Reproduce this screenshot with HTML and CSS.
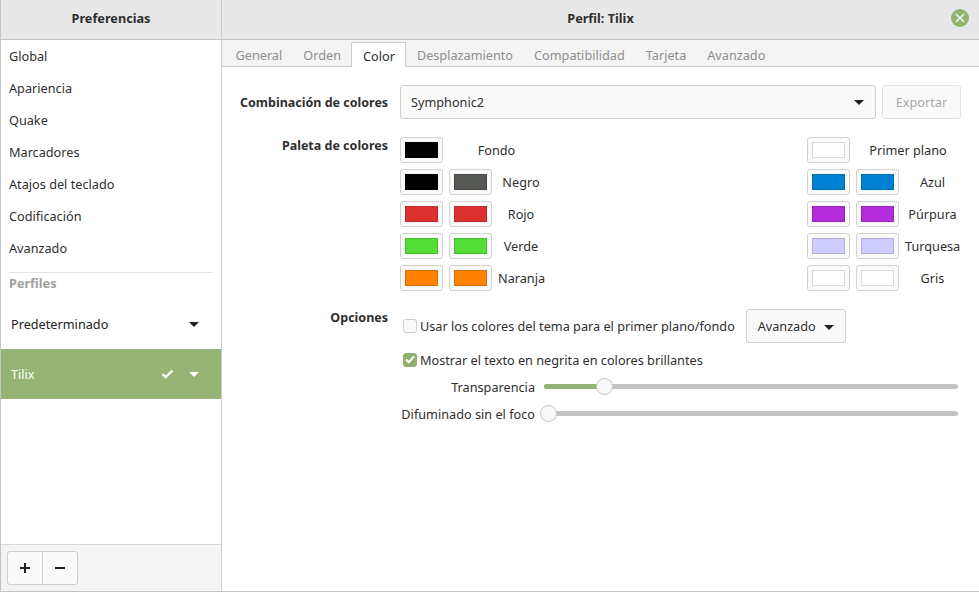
FILE: index.html
```html
<!DOCTYPE html>
<html lang="es">
<head>
    <meta charset="UTF-8">
    <title>Preferencias</title>
    <link rel="stylesheet" href="styles.css">
</head>
<body>
<div class="window">
    <aside class="side">
        <div class="head">Preferencias</div>
        <ul class="nav">
            <li>Global</li>
            <li>Apariencia</li>
            <li>Quake</li>
            <li>Marcadores</li>
            <li>Atajos del teclado</li>
            <li>Codificación</li>
            <li>Avanzado</li>
        </ul>
        <div class="profiles-title">Perfiles</div>
        <div class="profile">
            <span>Predeterminado</span>
            <i class="arrow"></i>
        </div>
        <div class="profile active">
            <span>Tilix</span>
            <svg class="tick" width="13" height="10" viewBox="0 0 13 10"><path d="M1.5 5.2l3.2 3L11.5 1.5" fill="none" stroke="#fff" stroke-width="2.4"/></svg>
            <i class="arrow"></i>
        </div>
        <div class="side-foot">
            <div class="addremove">
                <button><svg width="12" height="12" viewBox="0 0 12 12"><path d="M6 1v10M1 6h10" stroke="#222" stroke-width="2"/></svg></button>
                <button><svg width="12" height="12" viewBox="0 0 12 12"><path d="M1 6h10" stroke="#222" stroke-width="2"/></svg></button>
            </div>
        </div>
    </aside>
    <main class="main">
        <div class="head">
            Perfil: Tilix
            <span class="close"><svg width="10" height="10" viewBox="0 0 10 10"><path d="M1 1l8 8M9 1l-8 8" stroke="#fff" stroke-width="1.3"/></svg></span>
        </div>
        <div class="tabs">
            <a>General</a>
            <a>Orden</a>
            <a class="current">Color</a>
            <a>Desplazamiento</a>
            <a>Compatibilidad</a>
            <a>Tarjeta</a>
            <a>Avanzado</a>
        </div>
        <div class="content">
            <div class="row-scheme">
                <label class="lbl">Combinación de colores</label>
                <div class="combo">Symphonic2 <i class="arrow"></i></div>
                <button class="export">Exportar</button>
            </div>
            <div class="row-palette">
                <label class="lbl lbl-pal">Paleta de colores</label>
                <div class="palette">
                    <div class="pal-col">
                        <div class="pal-row"><span class="sw"><b class="c-black"></b></span><span class="name wide">Fondo</span></div>
                        <div class="pal-row"><span class="sw"><b class="c-black"></b></span><span class="sw"><b class="c-grey"></b></span><span class="name">Negro</span></div>
                        <div class="pal-row"><span class="sw"><b class="c-red"></b></span><span class="sw"><b class="c-red"></b></span><span class="name">Rojo</span></div>
                        <div class="pal-row"><span class="sw"><b class="c-green"></b></span><span class="sw"><b class="c-green"></b></span><span class="name">Verde</span></div>
                        <div class="pal-row"><span class="sw"><b class="c-orange"></b></span><span class="sw"><b class="c-orange"></b></span><span class="name">Naranja</span></div>
                    </div>
                    <div class="pal-col pal-right">
                        <div class="pal-row"><span class="sw"><b class="c-white"></b></span><span class="name wide">Primer plano</span></div>
                        <div class="pal-row"><span class="sw"><b class="c-blue"></b></span><span class="sw"><b class="c-blue"></b></span><span class="name">Azul</span></div>
                        <div class="pal-row"><span class="sw"><b class="c-purple"></b></span><span class="sw"><b class="c-purple"></b></span><span class="name">Púrpura</span></div>
                        <div class="pal-row"><span class="sw"><b class="c-lav"></b></span><span class="sw"><b class="c-lav"></b></span><span class="name">Turquesa</span></div>
                        <div class="pal-row"><span class="sw"><b class="c-white"></b></span><span class="sw"><b class="c-white"></b></span><span class="name">Gris</span></div>
                    </div>
                </div>
            </div>
            <div class="row-options">
                <label class="lbl lbl-opt">Opciones</label>
                <div class="options">
                    <div class="opt-theme">
                        <span class="check"></span>
                        <span class="opt-text">Usar los colores del tema para el primer plano/fondo</span>
                        <button class="adv">Avanzado <i class="arrow"></i></button>
                    </div>
                    <div class="opt-bold">
                        <span class="check on"><svg width="10" height="9" viewBox="0 0 10 9"><path d="M1 4.6l2.8 2.6L9 1.4" fill="none" stroke="#fff" stroke-width="2"/></svg></span>
                        <span class="opt-text">Mostrar el texto en negrita en colores brillantes</span>
                    </div>
                    <div class="slider-row">
                        <span class="sl-label">Transparencia</span>
                        <div class="slider"><div class="fill" style="width: 60px"></div><span class="knob" style="left: 52px"></span></div>
                    </div>
                    <div class="slider-row">
                        <span class="sl-label">Difuminado sin el foco</span>
                        <div class="slider"><span class="knob" style="left: -4px"></span></div>
                    </div>
                </div>
            </div>
        </div>
    </main>
</div>
</body>
</html>
```

FILE: styles.css
```css
* {
    margin: 0;
    padding: 0;
    box-sizing: border-box;
}
html, body {
    width: 979px;
    height: 592px;
    overflow: hidden;
}
body {
    font-family: "Noto Sans", sans-serif;
    font-size: 12.7px;
    color: #2f2f2f;
    background: #fff;
}
button {
    font: inherit;
    color: inherit;
}
.window {
    display: flex;
    height: 592px;
    border-left: 1px solid #c4c4c4;
    border-bottom: 1px solid #c4c4c4;
}
.side {
    width: 221px;
    flex: none;
    display: flex;
    flex-direction: column;
    border-right: 1px solid #cdcdcd;
}
.main {
    flex: 1;
    min-width: 0;
    display: flex;
    flex-direction: column;
}
.head {
    height: 40px;
    flex: none;
    background: #e8e8e8;
    border-bottom: 1px solid #c4c4c4;
    display: flex;
    align-items: center;
    justify-content: center;
    padding-bottom: 3px;
    font-weight: 700;
    position: relative;
}
.close {
    position: absolute;
    right: 10px;
    top: 9px;
    width: 18px;
    height: 18px;
    border-radius: 50%;
    background: #93b372;
    display: flex;
    align-items: center;
    justify-content: center;
}
.nav {
    list-style: none;
}
.nav li {
    height: 32px;
    line-height: 32px;
    padding-left: 8px;
}
.profiles-title {
    margin: 8px 8px 0;
    border-top: 1px solid #e4e4e4;
    padding-top: 1px;
    height: 27px;
    font-weight: 700;
    color: #a0a0a0;
}
.profile {
    height: 50px;
    display: flex;
    align-items: center;
    padding: 0 22px 0 10px;
    color: #222;
}
.profile span {
    flex: 1;
}
.profile.active {
    background: #95b375;
    color: #fff;
}
.tick {
    margin-right: 15px;
}
.arrow {
    display: inline-block;
    width: 0;
    height: 0;
    border-left: 5px solid transparent;
    border-right: 5px solid transparent;
    border-top: 5px solid #222;
}
.active .arrow {
    border-top-color: #fff;
}
.side-foot {
    margin-top: auto;
    height: 47px;
    background: #f4f4f4;
    border-top: 1px solid #d8d8d8;
    padding: 6px;
}
.addremove {
    display: flex;
    width: 71px;
    height: 34px;
    border: 1px solid #cfcfcf;
    border-radius: 3px;
    background: #fafafa;
}
.addremove button {
    flex: 1;
    border: 0;
    background: none;
    display: flex;
    align-items: center;
    justify-content: center;
}
.addremove button + button {
    border-left: 1px solid #cfcfcf;
}
.tabs {
    height: 27px;
    flex: none;
    background: #f4f4f4;
    border-bottom: 1px solid #cdcdcd;
    display: flex;
    padding-left: 3px;
}
.tabs a {
    padding: 0 10.5px;
    line-height: 30px;
    color: #8e8e8e;
    height: 26px;
}
.tabs a.current {
    margin-top: 2px;
    height: 25px;
    line-height: 26px;
    background: #fff;
    color: #2f2f2f;
    border: 1px solid #cdcdcd;
    border-bottom: 0;
}
.content {
    padding: 18px 18px 0 18px;
}
.lbl {
    width: 148px;
    text-align: right;
    font-size: 12.5px;
    font-weight: 700;
    margin-right: 12px;
    flex: none;
    white-space: nowrap;
}
.row-scheme {
    display: flex;
    align-items: center;
    height: 34px;
}
.combo {
    width: 476px;
    height: 34px;
    border: 1px solid #cfcfcf;
    border-radius: 3px;
    background: #fafafa;
    display: flex;
    align-items: center;
    justify-content: space-between;
    padding: 0 11px 0 10px;
}
.export {
    margin-left: 6px;
    width: 79px;
    height: 34px;
    border: 1px solid #e2e2e2;
    border-radius: 3px;
    background: #fafafa;
    color: #a8a8a8;
}
.row-palette {
    display: flex;
    margin-top: 18px;
}
.lbl-pal {
    line-height: 17px;
}
.palette {
    display: flex;
    justify-content: space-between;
    width: 561px;
}
.pal-col {
    width: 144px;
}
.pal-right {
    width: 154px;
}
.pal-right .name {
    padding-right: 1px;
}
.pal-row {
    display: flex;
    align-items: center;
    height: 26px;
    margin-bottom: 6px;
}
.sw {
    flex: none;
    width: 43px;
    height: 26px;
    border: 1px solid #d2d2d2;
    border-radius: 3px;
    background: #fafafa;
    padding: 4px;
    margin-right: 6px;
}
.sw b {
    display: block;
    height: 16px;
    border: 1px solid rgba(0, 0, 0, 0.15);
}
.name {
    flex: 1;
    text-align: center;
    white-space: nowrap;
}
.c-black { background: #000; }
.c-grey { background: #555753; }
.c-red { background: #dd3131; }
.c-green { background: #55dd37; }
.c-orange { background: #ff8300; }
.c-white { background: #fff; }
.c-blue { background: #0080d2; }
.c-purple { background: #b42bdc; }
.c-lav { background: #cfcdfb; }
.row-options {
    display: flex;
    margin-top: 11px;
}
.lbl-opt {
    line-height: 19px;
}
.options {
    flex: 1;
}
.opt-theme {
    display: flex;
    align-items: center;
    height: 34px;
    padding-left: 3px;
    margin-top: 1px;
}
.opt-bold {
    display: flex;
    align-items: center;
    height: 17px;
    margin-top: 8px;
    padding-left: 3px;
}
.check {
    width: 14px;
    height: 14px;
    border: 1px solid #cfcfcf;
    border-radius: 3px;
    background: #fafafa;
    margin-right: 3px;
    display: flex;
    align-items: center;
    justify-content: center;
}
.check.on {
    background: #8fb070;
    border-color: #8fb070;
}
.adv {
    margin-left: 11px;
    width: 100px;
    height: 34px;
    border: 1px solid #cfcfcf;
    border-radius: 3px;
    background: #fafafa;
}
.adv .arrow {
    margin-left: 5px;
    vertical-align: 1px;
}
.slider-row {
    display: flex;
    align-items: center;
    height: 17px;
    margin-top: 10px;
}
.sl-label {
    width: 135px;
    text-align: right;
    flex: none;
    white-space: nowrap;
}
.slider {
    position: relative;
    margin-left: 9px;
    width: 414px;
    height: 5px;
    border-radius: 3px;
    background: #c4c4c4;
}
.fill {
    height: 5px;
    border-radius: 3px;
    background: #93b372;
}
.knob {
    position: absolute;
    top: -6px;
    width: 17px;
    height: 17px;
    border-radius: 50%;
    border: 1px solid #c4c4c4;
    background: #fafafa;
}
```
